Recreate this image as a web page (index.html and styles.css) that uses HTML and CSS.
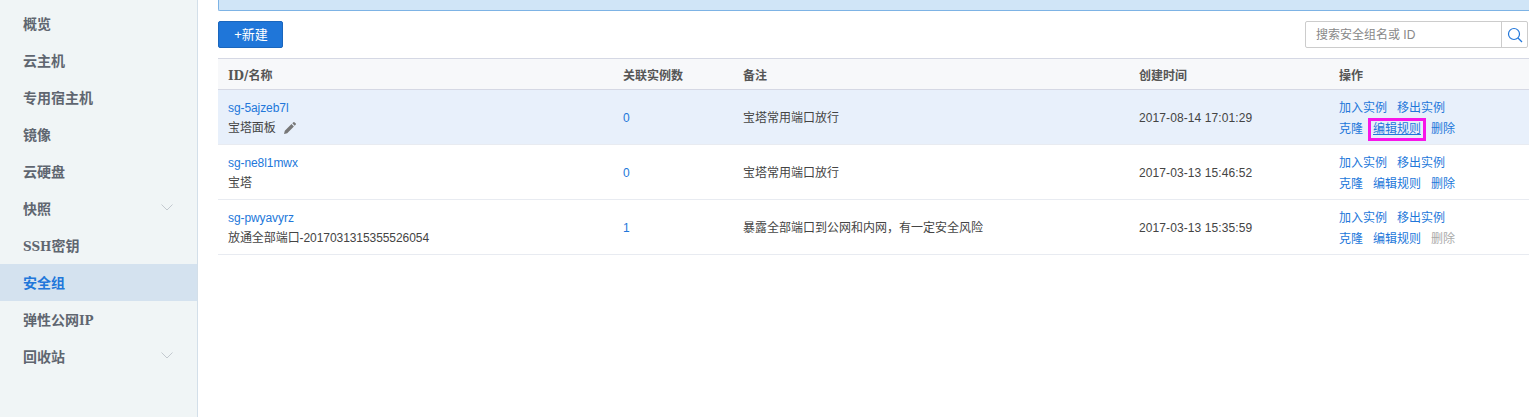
FILE: index.html
```html
<!DOCTYPE html>
<html lang="zh-CN">
<head>
<meta charset="utf-8">
<title>安全组</title>
<link rel="stylesheet" href="styles.css">
</head>
<body>
<div class="app">
  <nav class="sidebar">
    <a class="nav-item">概览</a>
    <a class="nav-item">云主机</a>
    <a class="nav-item">专用宿主机</a>
    <a class="nav-item">镜像</a>
    <a class="nav-item">云硬盘</a>
    <a class="nav-item">快照<svg class="chev" width="12" height="7" viewBox="0 0 12 7"><path d="M.5.5 6 6 11.500.5" fill="none" stroke="#c3c9cf"/></svg></a>
    <a class="nav-item"><span><span class="lat">SSH</span>密钥</span></a>
    <a class="nav-item active">安全组</a>
    <a class="nav-item"><span>弹性公网<span class="lat">IP</span></span></a>
    <a class="nav-item">回收站<svg class="chev" width="12" height="7" viewBox="0 0 12 7"><path d="M.5.5 6 6 11.500.5" fill="none" stroke="#c3c9cf"/></svg></a>
  </nav>
  <main class="main">
    <div class="notice"></div>
    <div class="toolbar">
      <button class="btn">+新建</button>
      <div class="search">
        <span class="search-input">搜索安全组名或 ID</span>
        <span class="search-btn"><svg width="16" height="16" viewBox="0 0 16 16"><circle cx="7" cy="7" r="5.500" fill="none" stroke="#2277da" stroke-width="1.200"/><path d="M11 11l4 4" stroke="#2277da" stroke-width="1.200"/></svg></span>
      </div>
    </div>
    <table class="grid">
      <colgroup><col class="c1"><col class="c2"><col class="c3"><col class="c4"><col></colgroup>
      <thead>
        <tr><th>ID/名称</th><th>关联实例数</th><th>备注</th><th>创建时间</th><th>操作</th></tr>
      </thead>
      <tbody>
        <tr class="hover">
          <td><a class="link sgid">sg-5ajzeb7l</a><div class="name">宝塔面板<svg class="pen" width="14" height="14" viewBox="0 0 14 14"><path d="M1 13l.8-3.200 6.700-6.700 2.400 2.400-6.700 6.700zM9.300 2.300l1.100-1.100a.7.700 0 0 1 1 0l1.400 1.400a.7.700 0 0 1 0 1l-1.100 1.100z" fill="#777"/></svg></div></td>
          <td><a class="link">0</a></td>
          <td>宝塔常用端口放行</td>
          <td class="date">2017-08-14 17:01:29</td>
          <td class="op-cell"><div class="ops"><a class="link">加入实例</a><a class="link">移出实例</a></div><div class="ops"><a class="link">克隆</a><a class="link mark">编辑规则</a><a class="link">删除</a></div></td>
        </tr>
        <tr>
          <td><a class="link sgid">sg-ne8l1mwx</a><div class="name">宝塔</div></td>
          <td><a class="link">0</a></td>
          <td>宝塔常用端口放行</td>
          <td class="date">2017-03-13 15:46:52</td>
          <td class="op-cell"><div class="ops"><a class="link">加入实例</a><a class="link">移出实例</a></div><div class="ops"><a class="link">克隆</a><a class="link">编辑规则</a><a class="link">删除</a></div></td>
        </tr>
        <tr>
          <td><a class="link sgid">sg-pwyavyrz</a><div class="name">放通全部端口-2017031315355526054</div></td>
          <td><a class="link">1</a></td>
          <td>暴露全部端口到公网和内网，有一定安全风险</td>
          <td class="date">2017-03-13 15:35:59</td>
          <td class="op-cell"><div class="ops"><a class="link">加入实例</a><a class="link">移出实例</a></div><div class="ops"><a class="link">克隆</a><a class="link">编辑规则</a><a class="link off">删除</a></div></td>
        </tr>
      </tbody>
    </table>
  </main>
</div>
</body>
</html>
```
FILE: styles.css
```css
* { box-sizing: border-box; }
html, body { margin: 0; height: 100%; overflow: hidden; background: #fff; }
body { font: 12px/20px "Liberation Sans", "Noto Sans CJK SC", sans-serif; color: #444; }
.app { display: flex; height: 417px; }
.sidebar { width: 198px; flex: none; padding-top: 5px; background: #f0f5f6; border-right: 1px solid #d3dfe9; }
.nav-item { display: flex; align-items: center; justify-content: space-between; height: 37px; padding: 0 24px 2px 23px; font: bold 14px "Noto Sans CJK SC", sans-serif; color: #5f6670; }
.lat { font: bold 12px "DejaVu Serif", serif; }
.nav-item.active { background: #d4e2ef; color: #2277da; }
.chev { margin-bottom: 1px; }
.main { flex: 1; min-width: 0; padding-left: 20px; }
.notice { height: 11px; background: #d0e5f7; border: 1px solid #7db3e5; border-top: 0; border-right: 0; border-radius: 0 0 0 2px; }
.toolbar { display: flex; justify-content: space-between; align-items: center; margin-top: 10px; height: 27px; padding-right: 1px; }
.btn { width: 65px; height: 27px; padding: 0 0 2px 1px; font: 13px "Liberation Sans", "Noto Sans CJK SC", sans-serif; color: #fff; background: #1f76d9; border: 1px solid #1a66bd; border-radius: 2px; }
.search { display: flex; width: 223px; height: 27px; border: 1px solid #ccc; border-radius: 2px; }
.search-input { flex: 1; padding: 1px 0 0 10px; line-height: 25px; color: #888; }
.search-btn { display: flex; align-items: center; justify-content: center; width: 26px; border-left: 1px solid #ccc; }
.grid { width: 100%; margin-top: 10px; table-layout: fixed; border-collapse: collapse; border-top: 1px solid #d5d8e4; }
.c1 { width: 395px; }
.c2 { width: 120px; }
.c3 { width: 396px; }
.c4 { width: 200px; }
th { height: 31px; padding: 0 10px; text-align: left; font: bold 12px "DejaVu Serif", "Noto Sans CJK SC", serif; color: #555; background: #f7f8fa; border-bottom: 1px solid #d5d8e4; }
td { height: 55px; padding: 2px 10px 0; border-bottom: 1px solid #e8ebf1; }
.op-cell { padding-top: 3px; }
.hover td { background: #e8f0fb; }
.link { color: #2277da; }
.sgid { letter-spacing: -0.08px; }
.date { letter-spacing: 0.1px; }
.name { display: flex; align-items: center; color: #444; letter-spacing: -0.07px; }
.pen { margin-left: 7px; }
.ops { display: flex; gap: 10px; }
.ops + .ops { margin-top: 1px; }
.mark { align-self: center; margin: 0 -2px; padding: 0 2px; line-height: 17px; outline: 3px solid #f716e8; text-decoration: underline; }
.off { color: #aaa; }
```
